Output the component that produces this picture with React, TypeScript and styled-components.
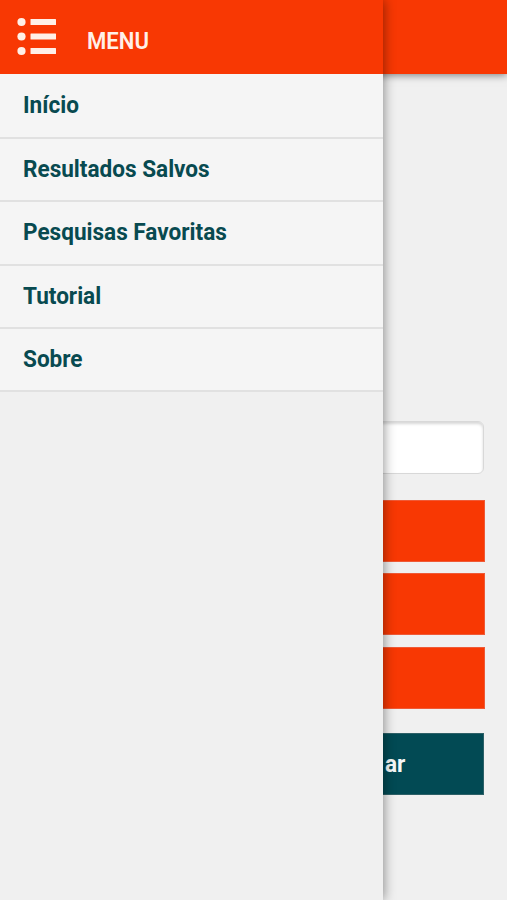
import React from "react";
import styled, { createGlobalStyle } from "styled-components";

const GlobalStyle = createGlobalStyle`
  * { box-sizing: border-box; }
  body {
    margin: 0;
    background: #f0f0f0;
    font-family: Roboto, "Liberation Sans", sans-serif;
  }
`;

const Screen = styled.div`
  position: relative;
  display: flex;
  flex-direction: column;
  width: 507px;
  height: 900px;
  overflow: hidden;
  background: #f0f0f0;
`;

const TopBar = styled.header`
  flex: none;
  height: 73.5px;
  background: #f83803;
  box-shadow: 0 1px 8px rgba(0, 0, 0, 0.5);
`;

const SearchForm = styled.main`
  display: flex;
  flex-direction: column;
  padding: 347px 22.5px 0 23px;
`;

const SearchField = styled.input`
  height: 53px;
  margin: 0 0.5px 26px 0;
  border: 1px solid #d8d8d8;
  border-radius: 6px;
  background: #fff;
  box-shadow: inset 0 2px 3px rgba(0, 0, 0, 0.16);
`;

const Options = styled.div`
  display: flex;
  flex-direction: column;
  gap: 11.6px;
  margin-bottom: 24.6px;
`;

const Option = styled.button`
  height: 62px;
  padding: 0;
  border: 1px solid #ef5a36;
  background: #f83803;
`;

const Condensed = styled.span<{ $scale?: number }>`
  display: inline-block;
  transform: scaleX(${({ $scale = 0.94 }) => $scale});
  transform-origin: left center;
  white-space: nowrap;
`;

const SubmitButton = styled.button`
  height: 62px;
  margin-right: 1px;
  padding: 0 0 0 360.5px;
  border: 1px solid #2d6067;
  background: #024a54;
  color: #f5f8f8;
  font: 700 24px/59px Roboto, "Liberation Sans", sans-serif;
  text-align: left;
`;

const Drawer = styled.aside`
  position: absolute;
  top: 0;
  bottom: 0;
  left: 0;
  width: 383px;
  background: #f0f0f0;
  box-shadow: 1px 0 11px rgba(0, 0, 0, 0.42);
`;

const DrawerHeader = styled.div`
  display: flex;
  height: 73.5px;
  padding: 17px 0 0 17px;
  gap: 30px;
  background: #f83803;
`;

const Title = styled.h1`
  margin: 10px 0 0;
  color: #fff0e8;
  font-size: 23.5px;
  font-weight: 600;
  line-height: 28px;
`;

const Menu = styled.nav`
  display: flex;
  flex-direction: column;
`;

const MenuItem = styled.a<{ $tall?: boolean }>`
  height: ${({ $tall }) => ($tall ? 65.5 : 63.3)}px;
  padding: ${({ $tall }) => ($tall ? 17.5 : 16.2)}px 0 0 23px;
  border-bottom: 2px solid #e1e1e1;
  background: #f5f5f5;
  color: #084a50;
  font-size: 24px;
  font-weight: 700;
  line-height: 28px;
`;

const ListIcon = () => (
  <svg width="40" height="40" viewBox="0 0 40 40" fill="#fff0e8" aria-hidden="true">
    {[5, 19.5, 34].map((y) => (
      <g key={y}>
        <circle cx="4.5" cy={y} r="4.1" />
        <rect x="13.5" y={y - 3} width="25.5" height="6" rx="0.5" />
      </g>
    ))}
  </svg>
);

const items = ["Início", "Resultados Salvos", "Pesquisas Favoritas", "Tutorial", "Sobre"];

export default function App() {
  return (
    <>
      <GlobalStyle />
      <Screen>
        <TopBar />
        <SearchForm>
          <SearchField />
          <Options>
            <Option />
            <Option />
            <Option />
          </Options>
          <SubmitButton>
            <Condensed>ar</Condensed>
          </SubmitButton>
        </SearchForm>
        <Drawer>
          <DrawerHeader>
            <ListIcon />
            <Title>
              <Condensed $scale={0.94}>MENU</Condensed>
            </Title>
          </DrawerHeader>
          <Menu>
            {items.map((label, i) => (
              <MenuItem key={label} $tall={i === 0}>
                <Condensed>{label}</Condensed>
              </MenuItem>
            ))}
          </Menu>
        </Drawer>
      </Screen>
    </>
  );
}
